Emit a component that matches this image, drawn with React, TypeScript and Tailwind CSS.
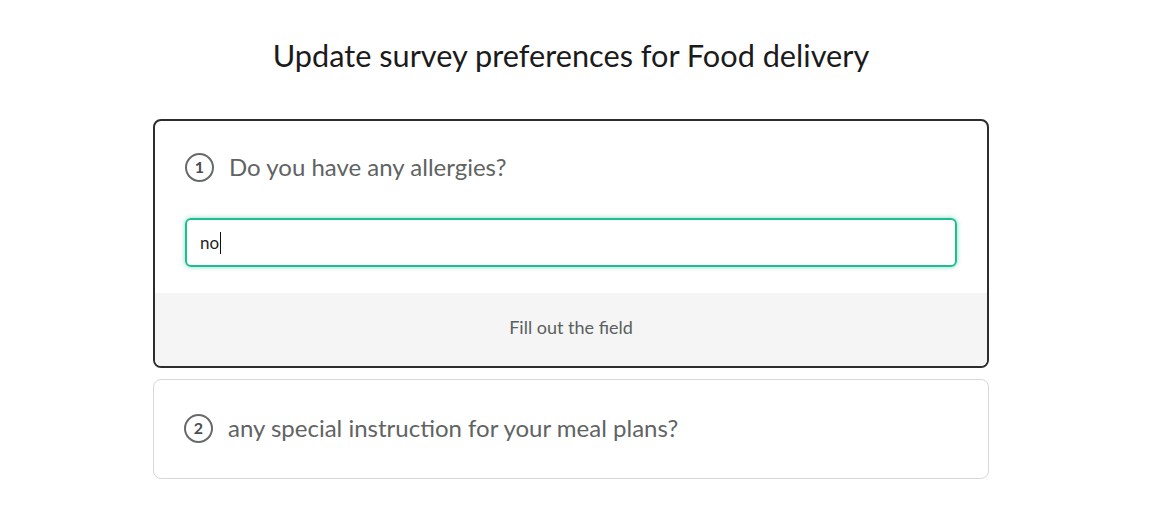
function StepBadge({ n }: { n: number }) {
  return (
    <span className="flex h-[29px] w-[29px] shrink-0 items-center justify-center rounded-full border-2 border-[#666a69] text-[16px] font-bold text-[#4a4e4d]">
      {n}
    </span>
  );
}

export default function App() {
  return (
    <div className="min-h-screen bg-white pt-[38px] pr-[12px] font-['Lato',sans-serif]">
      <h1 className="text-center text-[30.7px] leading-[36px] text-[#1b1b1b]">
        Update survey preferences for Food delivery
      </h1>

      <div className="mx-auto mt-[45px] w-[836px] space-y-[11px]">
        {/* active question */}
        <div className="overflow-hidden rounded-[8px] border-2 border-[#2d2d2d]">
          <div className="px-[30px] pt-[31px] pb-[26px]">
            <div className="flex items-center gap-[15px]">
              <StepBadge n={1} />
              <span className="text-[24px] leading-[30px] text-[#5f6463]">Do you have any allergies?</span>
            </div>
            <div className="mt-[36px] flex h-[49px] items-center rounded-[6px] border-2 border-[#1fbe91] px-[13px] shadow-[0_0_5px_rgba(31,190,145,0.55)]">
              <span className="text-[17px] text-[#222]">no</span>
              <span className="ml-[1px] h-[22px] w-px bg-[#111]" />
            </div>
          </div>
          <div className="flex h-[73px] items-center justify-center bg-[#f4f5f4] pb-[4px] text-[18px] text-[#5b5f5e]">
            Fill out the field
          </div>
        </div>

        {/* next question */}
        <div className="rounded-[8px] border border-[#d6dad9] px-[30px] pt-[33px] pb-[35px]">
          <div className="flex items-center gap-[15px]">
            <StepBadge n={2} />
            <span className="text-[24px] leading-[30px] text-[#5f6463]">any special instruction for your meal plans?</span>
          </div>
        </div>
      </div>
    </div>
  );
}
